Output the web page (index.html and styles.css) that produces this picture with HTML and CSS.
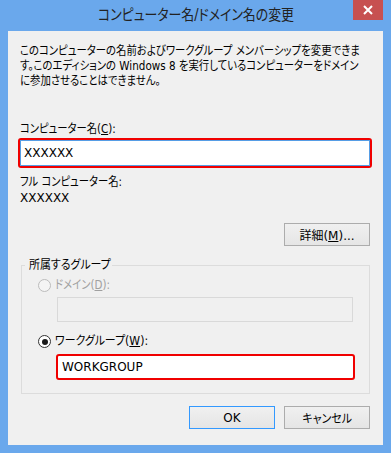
FILE: index.html
```html
<!DOCTYPE html>
<html lang="ja">
<head>
  <meta charset="UTF-8">
  <title>コンピューター名/ドメイン名の変更</title>
  <link rel="stylesheet" href="styles.css">
</head>
<body>
  <div class="window">
    <div class="titlebar">
      <div class="title"><span class="narrow">コンピューター名/ドメイン名の変更</span></div>
      <span class="close">
        <svg width="10" height="10" viewBox="0 0 10 10"><path d="M1 1L9 9M9 1L1 9" stroke="#fff" stroke-width="2"/></svg>
      </span>
    </div>

    <div class="content">
      <p class="intro">
        <span>このコンピューターの名前およびワークグループ メンバーシップを変更できま</span>
        <span>す。このエディションの Windows 8 を実行しているコンピューターをドメイン</span>
        <span>に参加させることはできません。</span>
      </p>

      <div class="label"><span class="narrow">コンピューター名(<u>C</u>):</span></div>
      <div class="mark name-mark">
        <div class="textbox focused">XXXXXX</div>
      </div>

      <div class="label full-label"><span class="narrow">フル コンピューター名:</span></div>
      <div class="value">XXXXXX</div>

      <div class="more-row">
        <button class="btn">詳細(<u>M</u>)...</button>
      </div>

      <fieldset class="group">
        <legend><span class="narrow-lite">所属するグループ</span></legend>
        <div class="radio-row disabled"><span class="radio"></span><span class="narrow">ドメイン(<u>D</u>):</span></div>
        <div class="textbox off"></div>
        <div class="radio-row wg-row"><span class="radio checked"></span><span class="narrow-lite">ワークグループ(<u>W</u>):</span></div>
        <div class="mark wg-mark">WORKGROUP</div>
      </fieldset>

      <div class="actions">
        <button class="btn default">OK</button>
        <button class="btn"><span class="narrow-lite">キャンセル</span></button>
      </div>
    </div>
  </div>
</body>
</html>
```

FILE: styles.css
```css
body {
  margin: 0;
  background: #fff;
  font-family: "DejaVu Sans", "Noto Sans CJK JP", sans-serif;
  font-size: 12px;
  font-feature-settings: "palt";
  color: #000;
}
/* Meiryo UI is much narrower than the fonts we have, so squeeze the Japanese runs */
.narrow, .narrow-lite {
  display: inline-block;
  white-space: nowrap;
  transform: scaleX(0.86);
  transform-origin: left center;
}
.narrow-lite {
  transform: scaleX(0.91);
}
.window {
  width: 391px;
  height: 453px;
  background: #6aa8ec;
  display: flex;
  flex-direction: column;
}
.titlebar {
  position: relative;
  height: 31px;
  flex: none;
}
.title {
  text-align: center;
  line-height: 30px;
  font-size: 15px;
  color: #222;
}
.title .narrow {
  transform-origin: center;
}
.close {
  position: absolute;
  top: 0;
  right: 8px;
  width: 30px;
  height: 20px;
  background: #c75050;
  display: flex;
  align-items: center;
  justify-content: center;
}
.content {
  flex: 1;
  margin: 0 8px 8px 8px;
  background: #f0f0f0;
  padding: 13px 13px 0 12px;
}
.intro {
  margin: 0;
  line-height: 15px;
}
.intro span {
  display: block;
  white-space: nowrap;
  transform: scaleX(0.865);
  transform-origin: left center;
}
.label {
  margin-top: 33px;
  line-height: 15px;
}
.full-label {
  margin-top: 7px;
}
.value {
  margin-top: 1px;
  line-height: 15px;
}
.mark {
  border: 2px solid #f00000;
  border-radius: 3px;
  background: #fff;
}
.name-mark {
  margin: 1px -2px 0 -2px;
}
.textbox {
  box-sizing: border-box;
  background: #fff;
  border: 1px solid #abadb3;
  height: 26px;
  line-height: 24px;
  padding-left: 3px;
}
.textbox.focused {
  border-color: #569de5;
}
.textbox.off {
  margin: 4px 0 0 35px;
  width: 296px;
  height: 25px;
  background: #f0f0f0;
  border-color: #d9d9d9;
}
.more-row {
  margin-top: 17px;
  display: flex;
  justify-content: flex-end;
}
.btn {
  width: 86px;
  height: 23px;
  padding: 0;
  border: 1px solid #acacac;
  background: linear-gradient(#f0f0f0, #e5e5e5);
  font-family: inherit;
  font-size: 12px;
  font-feature-settings: "palt";
  color: #000;
}
.btn .narrow-lite {
  transform-origin: center;
}
.btn.default {
  border-color: #3399ff;
}
.group {
  margin: 12px 0 0 1px;
  padding: 0 0 13px 0;
  border: 1px solid #dcdcdc;
  min-width: 0;
}
.group legend {
  box-sizing: border-box;
  width: 87px;
  margin-left: 3px;
  padding: 0 0 0 4px;
  line-height: 15px;
}
.radio-row {
  margin-top: 5px;
  padding-left: 16px;
  line-height: 15px;
  display: flex;
  align-items: center;
}
.radio-row.disabled {
  color: #a0a0a0;
}
.wg-row {
  margin-top: 12px;
}
.radio {
  box-sizing: border-box;
  flex: none;
  width: 13px;
  height: 13px;
  margin-right: 4px;
  border: 1px solid #333;
  border-radius: 50%;
  background: #fff;
  display: flex;
  align-items: center;
  justify-content: center;
}
.disabled .radio {
  border-color: #bcbcbc;
  background: #f4f4f4;
}
.radio.checked::after {
  content: "";
  width: 6px;
  height: 6px;
  border-radius: 50%;
  background: #1a1a1a;
}
.wg-mark {
  margin: 5px 0 0 34px;
  width: 291px;
  height: 22px;
  line-height: 22px;
  padding-left: 4px;
}
.actions {
  margin-top: 12px;
  display: flex;
  justify-content: flex-end;
  gap: 9px;
}
```
